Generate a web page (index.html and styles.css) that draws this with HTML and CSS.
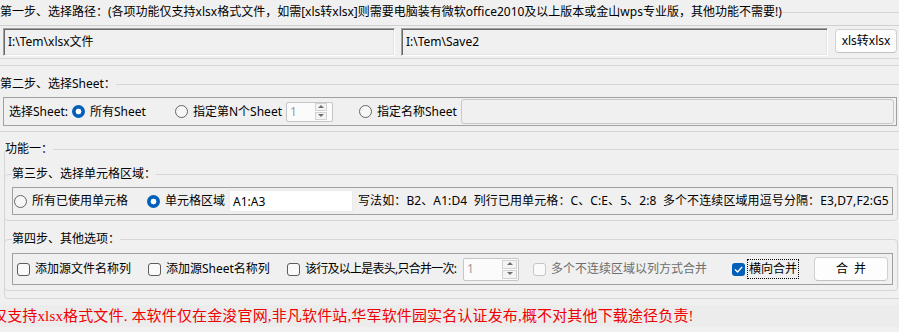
FILE: index.html
```html
<!DOCTYPE html>
<html lang="zh-CN">
<head>
    <meta charset="UTF-8">
    <meta name="viewport" content="width=device-width, initial-scale=1.0">
    <title>xlsx合并工具</title>
    <link rel="stylesheet" href="styles.css">
</head>
<body>
    <!-- 第一步: paths -->
    <fieldset class="group group-top">
        <legend>第一步、选择路径：(各项功能仅支持xlsx格式文件，如需[xls转xlsx]则需要电脑装有微软office2010及以上版本或金山wps专业版，其他功能不需要!)</legend>
        <div class="path-row">
            <div class="path-box path-src">I:\Tem\xlsx文件</div>
            <div class="path-box path-dst">I:\Tem\Save2</div>
            <button class="btn btn-convert">xls转xlsx</button>
        </div>
    </fieldset>

    <!-- 第二步: sheet -->
    <fieldset class="group group-top group-sheet">
        <legend>第二步、选择Sheet：</legend>
        <div class="panel sheet-row">
            <span class="row-label">选择Sheet:</span>
            <span class="opt opt-all"><span class="radio checked"></span>所有Sheet</span>
            <span class="opt opt-nth"><span class="radio"></span>指定第N个Sheet</span>
            <span class="spin spin-nth">
                <span class="spin-val">1</span>
                <span class="spin-btns"><span class="spin-up"></span><span class="spin-down"></span></span>
            </span>
            <span class="opt opt-name"><span class="radio"></span>指定名称Sheet</span>
            <span class="textbox sheet-name"></span>
        </div>
    </fieldset>

    <!-- 功能一 -->
    <fieldset class="group group-func">
        <legend>功能一：</legend>

        <fieldset class="group group-step group-range">
            <legend>第三步、选择单元格区域：</legend>
            <div class="panel range-row">
                <span class="opt opt-used"><span class="radio"></span>所有已使用单元格</span>
                <span class="opt opt-range"><span class="radio checked"></span>单元格区域</span>
                <span class="textbox range-input">A1:A3</span>
                <span class="hint">写法如：B2、A1:D4&nbsp;&nbsp;列行已用单元格：C、C:E、5、2:8&nbsp;&nbsp;多个不连续区域用逗号分隔：E3,D7,F2:G5</span>
            </div>
        </fieldset>

        <fieldset class="group group-step group-other">
            <legend>第四步、其他选项：</legend>
            <div class="panel other-row">
                <span class="opt cb-file"><span class="check"></span>添加源文件名称列</span>
                <span class="opt cb-sheet"><span class="check"></span>添加源Sheet名称列</span>
                <span class="opt cb-head"><span class="check"></span>该行及以上是表头,只合并一次:</span>
                <span class="spin spin-head">
                    <span class="spin-val">1</span>
                    <span class="spin-btns"><span class="spin-up"></span><span class="spin-down"></span></span>
                </span>
                <span class="opt cb-cols disabled"><span class="check"></span>多个不连续区域以列方式合并</span>
                <span class="opt cb-horiz">
                    <span class="check checked">
                        <svg viewBox="0 0 13 13" width="13" height="13"><path d="M3.3 6.7 L5.6 9 L9.8 4.3" fill="none" stroke="#fff" stroke-width="1.3" stroke-linecap="round" stroke-linejoin="round"/></svg>
                    </span>
                    <span class="focus">横向合并</span>
                </span>
                <button class="btn btn-merge">合&nbsp;&nbsp;并</button>
            </div>
        </fieldset>
    </fieldset>

    <div class="notice">仅支持xlsx格式文件. 本软件仅在金浚官网,非凡软件站,华军软件园实名认证发布,概不对其他下载途径负责!</div>
</body>
</html>
```

FILE: styles.css
```css
body {
    margin: 0;
    width: 899px;
    height: 332px;
    overflow: hidden;
    background-color: #f0f0f0;
    font-family: "Noto Sans", "Noto Sans CJK SC", sans-serif;
    font-size: 12px;
    line-height: 16px;
    color: #000;
}

/* group boxes */
.group {
    border: 1px solid #d6d6d6;
    border-radius: 4px;
    margin: 0;
    padding: 0;
    min-width: 0;
}

.group legend {
    padding: 0;
    line-height: 16px;
    white-space: nowrap;
}

.group-top {
    margin: 4px -8px 0;
    padding: 0 7px 6px;
}

.group-sheet {
    margin-top: 10px;
    padding-bottom: 5px;
}

.group-func {
    margin: 9px -8px 0 4px;
    padding: 0 0 7px 0;
}

.group-step {
    margin: 9px 8px 0 -1px;
    padding: 0 4px 5px 7px;
}

.group-other {
    margin-top: 10px;
}

/* step 1 */
.path-row {
    display: flex;
    align-items: flex-start;
    margin-top: 5px;
    padding-top: 2px;
    border-top: 1px solid #d0d0d0;
    border-bottom: 1px solid #d8d8d8;
    height: 30px;
}

.path-box {
    box-sizing: border-box;
    height: 28px;
    padding: 5px 4px 0;
    background-color: #f0f0f0;
    border: 1px solid;
    border-color: #a0a0a0 #ffffff #ffffff #a0a0a0;
    box-shadow: inset 1px 1px 0 #696969, inset -1px -1px 0 #e3e3e3;
    white-space: nowrap;
}

.path-src {
    margin-left: 3px;
    width: 392px;
}

.path-dst {
    margin-left: 6px;
    width: 427px;
}

.btn {
    box-sizing: border-box;
    font: inherit;
    color: #000;
    background-color: #fdfdfd;
    border: 1px solid #d0d0d0;
    border-bottom-color: #c2c2c2;
    border-radius: 4px;
    padding: 0;
}

.btn-convert {
    margin: 1px 2px 0 7px;
    width: 62px;
    height: 24px;
}

/* inner panels */
.panel {
    box-sizing: border-box;
    display: flex;
    align-items: center;
    border: 1px solid #a0a0a0;
    white-space: nowrap;
}

.sheet-row {
    margin: 5px 2px 0 3px;
    height: 29px;
    padding-left: 5px;
}

.range-row {
    margin-top: 5px;
    height: 28px;
}

.other-row {
    margin-top: 6px;
    height: 32px;
}

.opt {
    display: flex;
    align-items: center;
    flex: none;
}

.row-label {
    width: 63px;
    flex: none;
}

.opt-all { width: 103px; }
.opt-nth { width: 111px; }
.opt-name { width: 102px; margin-left: 26px; }

.opt-used { width: 133px; margin-left: 1px; }
.opt-range { width: 82px; }

.cb-file { width: 131px; margin-left: 4px; }
.cb-sheet { width: 139px; }
.cb-head { width: 176px; letter-spacing: -0.75px; }
.cb-cols { width: 199px; margin-left: 14px; }
.cb-horiz { width: 82px; }

/* radios and checks */
.radio {
    box-sizing: border-box;
    width: 13px;
    height: 13px;
    margin-right: 5px;
    border: 1px solid #666;
    border-radius: 50%;
    background-color: #f7f7f7;
    flex: none;
}

.radio.checked {
    border: none;
    background: radial-gradient(circle, #fff 0 2.6px, #005fb8 3.2px);
}

.check {
    box-sizing: border-box;
    width: 13px;
    height: 13px;
    margin-right: 5px;
    border: 1px solid #5c5c5c;
    border-radius: 3px;
    background-color: #fafafa;
    flex: none;
}

.check.checked {
    border: none;
    background-color: #005fb8;
}

.check svg {
    display: block;
}

.disabled {
    color: #6d6d6d;
}

.disabled .check {
    border-color: #c6c6c6;
}

.focus {
    margin-left: -2px;
    padding: 1px 1px;
    outline: 1px dotted #000;
    outline-offset: 0;
}

/* text inputs */
.textbox {
    box-sizing: border-box;
    display: block;
    flex: none;
}

.sheet-name {
    flex: 1;
    height: 25px;
    margin-right: 2px;
    border: 1px solid #c8c8c8;
    border-radius: 3px;
    background-color: #f0f0f0;
}

.range-input {
    width: 124px;
    height: 22px;
    padding: 3px 3px 0;
    border: 1px solid #ebebeb;
    background-color: #fff;
}

.hint {
    margin-left: 5px;
    letter-spacing: 0.1px;
}

/* numeric up-down */
.spin {
    box-sizing: border-box;
    display: flex;
    align-items: center;
    justify-content: space-between;
    flex: none;
    border: 1px solid #c6c6c6;
    border-radius: 2px;
    background-color: #fbfbfb;
    color: #9a9a9a;
}

.spin-nth {
    width: 47px;
    height: 20px;
    padding: 0 5px 0 3px;
}

.spin-head {
    width: 56px;
    height: 23px;
    padding: 0 1px 0 3px;
}

.spin-btns {
    display: flex;
    flex-direction: column;
    gap: 1px;
}

.spin-up,
.spin-down {
    box-sizing: border-box;
    position: relative;
    width: 12px;
    height: 8px;
    border: 1px solid #d2d2d2;
    background-color: #f4f4f4;
}

.spin-head .spin-up,
.spin-head .spin-down {
    width: 15px;
    height: 9px;
}

.spin-up::after,
.spin-down::after {
    content: "";
    position: absolute;
    left: 50%;
    top: 50%;
    margin: -2px 0 0 -3px;
    border-left: 3px solid transparent;
    border-right: 3px solid transparent;
}

.spin-up::after {
    border-bottom: 3px solid #707070;
}

.spin-down::after {
    border-top: 3px solid #707070;
}

.btn-merge {
    margin-left: 0;
    width: 74px;
    height: 24px;
}

/* footer notice */
.notice {
    margin-top: 6px;
    height: 22px;
    line-height: 22px;
    background-color: #ececec;
    color: #f00000;
    font-family: "Liberation Serif", "Noto Sans CJK SC", serif;
    font-size: 15px;
    letter-spacing: 0.15px;
    text-indent: -8px;
    white-space: nowrap;
}
```
